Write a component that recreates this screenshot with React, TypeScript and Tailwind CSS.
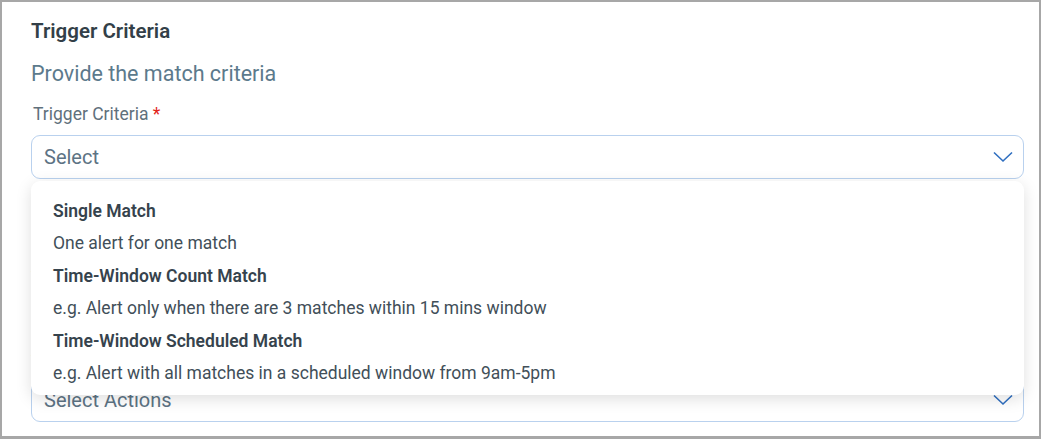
const options = [
  { title: "Single Match", desc: "One alert for one match" },
  { title: "Time-Window Count Match", desc: "e.g. Alert only when there are 3 matches within 15 mins window" },
  { title: "Time-Window Scheduled Match", desc: "e.g. Alert with all matches in a scheduled window from 9am-5pm" },
];

function Chevron() {
  return (
    <svg width="20" height="12" viewBox="0 0 20 12" fill="none" className="shrink-0">
      <path d="M1 1.5L10 10L19 1.5" stroke="#2f6fc0" strokeWidth="1.6" />
    </svg>
  );
}

function Select({ placeholder }: { placeholder: string }) {
  return (
    <div className="flex h-[44px] items-center justify-between rounded-[9px] border border-[#b9d1ee] bg-white pl-[12px] pr-[10px]">
      <span className="text-[20px] text-[#5d7384]">{placeholder}</span>
      <Chevron />
    </div>
  );
}

export default function App() {
  return (
    <div
      className="h-[439px] w-[1041px] border-2 border-b-[3px] border-[#a7a7a7] bg-white"
      style={{ fontFamily: "Roboto, 'Noto Sans', sans-serif" }}
    >
      <div className="relative pl-[29px] pr-[15px] pt-[17px]">
        <h2 className="text-[20.5px] font-semibold leading-6 text-[#333f48]">Trigger Criteria</h2>
        <p className="mt-[18px] text-[21.5px] leading-[26px] text-[#5c7a8c]">Provide the match criteria</p>
        <label className="mt-[16px] block pl-[2px] text-[17.5px] leading-[22px] text-[#5f707c]">
          Trigger Criteria <span className="text-[#e2231a]">*</span>
        </label>
        <div className="mt-[10px]">
          <Select placeholder="Select" />
        </div>

        <label className="mt-[76px] block text-[17.5px] leading-[22px] text-[#5f707c]">
          Alert Frequency <span className="text-[#e2231a]">*</span>
        </label>
        <div className="mt-[11px]">
          <Select placeholder="Select" />
        </div>
        <label className="mt-[7px] block text-[17.5px] leading-[22px] text-[#5f707c]">
          Actions <span className="text-[#e2231a]">*</span>
        </label>
        <div className="mt-[17px]">
          <Select placeholder="Select Actions" />
        </div>

        <div className="absolute left-[29px] right-[15px] top-[179px] rounded-[9px] bg-white pb-[6px] pl-[22px] pt-[14px] shadow-[0_4px_16px_rgba(0,0,0,0.13)]">
          {options.map((o) => (
            <div key={o.title}>
              <div className="text-[17.5px] font-semibold leading-[32.4px] text-[#36434d]">{o.title}</div>
              <div className="text-[17.5px] leading-[32.4px] text-[#424f59]">{o.desc}</div>
            </div>
          ))}
        </div>
      </div>
    </div>
  );
}
